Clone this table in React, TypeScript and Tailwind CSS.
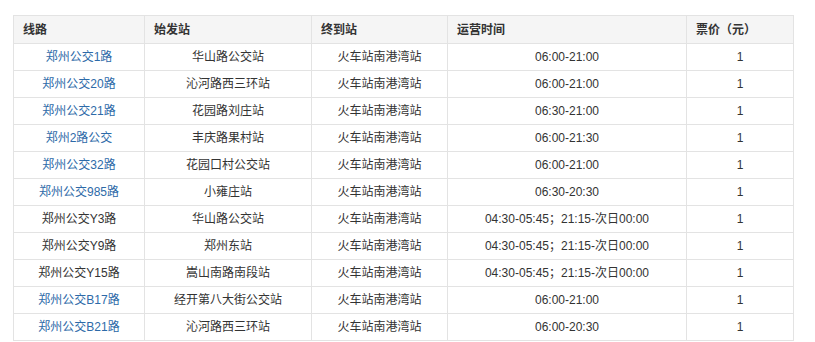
const rows = [
  { line: "郑州公交1路", link: true, start: "华山路公交站", end: "火车站南港湾站", time: "06:00-21:00", price: "1" },
  { line: "郑州公交20路", link: true, start: "沁河路西三环站", end: "火车站南港湾站", time: "06:00-21:00", price: "1" },
  { line: "郑州公交21路", link: true, start: "花园路刘庄站", end: "火车站南港湾站", time: "06:30-21:00", price: "1" },
  { line: "郑州2路公交", link: true, start: "丰庆路果村站", end: "火车站南港湾站", time: "06:00-21:30", price: "1" },
  { line: "郑州公交32路", link: true, start: "花园口村公交站", end: "火车站南港湾站", time: "06:00-21:00", price: "1" },
  { line: "郑州公交985路", link: true, start: "小雍庄站", end: "火车站南港湾站", time: "06:30-20:30", price: "1" },
  { line: "郑州公交Y3路", link: false, start: "华山路公交站", end: "火车站南港湾站", time: "04:30-05:45；21:15-次日00:00", price: "1" },
  { line: "郑州公交Y9路", link: false, start: "郑州东站", end: "火车站南港湾站", time: "04:30-05:45；21:15-次日00:00", price: "1" },
  { line: "郑州公交Y15路", link: false, start: "嵩山南路南段站", end: "火车站南港湾站", time: "04:30-05:45；21:15-次日00:00", price: "1" },
  { line: "郑州公交B17路", link: true, start: "经开第八大街公交站", end: "火车站南港湾站", time: "06:00-21:00", price: "1" },
  { line: "郑州公交B21路", link: true, start: "沁河路西三环站", end: "火车站南港湾站", time: "06:00-20:30", price: "1" },
];

const headers = ["线路", "始发站", "终到站", "运营时间", "票价（元）"];
const widths = ["w-[131px]", "w-[167px]", "w-[136px]", "w-[239px]", "w-[107px]"];

export default function App() {
  return (
    <div
      className="w-[815px] h-[342px] bg-white pt-[15px] pl-[13px] overflow-hidden"
      style={{ fontFamily: '"Liberation Sans", Arial, "Noto Sans CJK SC", sans-serif' }}
    >
      <table className="border-collapse table-fixed w-[781px] text-[12px] text-[#333]">
        <thead>
          <tr className="bg-[#f5f5f5] h-[28px]">
            {headers.map((h, i) => (
              <th
                key={h}
                className={`${widths[i]} border border-[#e3e3e3] text-left font-bold px-[9px] py-0 text-[#333]`}
              >
                {h}
              </th>
            ))}
          </tr>
        </thead>
        <tbody>
          {rows.map((r) => (
            <tr key={r.line} className="h-[27px]">
              <td className="border border-[#e3e3e3] text-center p-0">
                <span className={r.link ? "text-[#2d6aa8]" : "text-[#333]"}>{r.line}</span>
              </td>
              <td className="border border-[#e3e3e3] text-center p-0">{r.start}</td>
              <td className="border border-[#e3e3e3] text-center p-0">{r.end}</td>
              <td className="border border-[#e3e3e3] text-center p-0">{r.time}</td>
              <td className="border border-[#e3e3e3] text-center p-0">{r.price}</td>
            </tr>
          ))}
        </tbody>
      </table>
    </div>
  );
}
